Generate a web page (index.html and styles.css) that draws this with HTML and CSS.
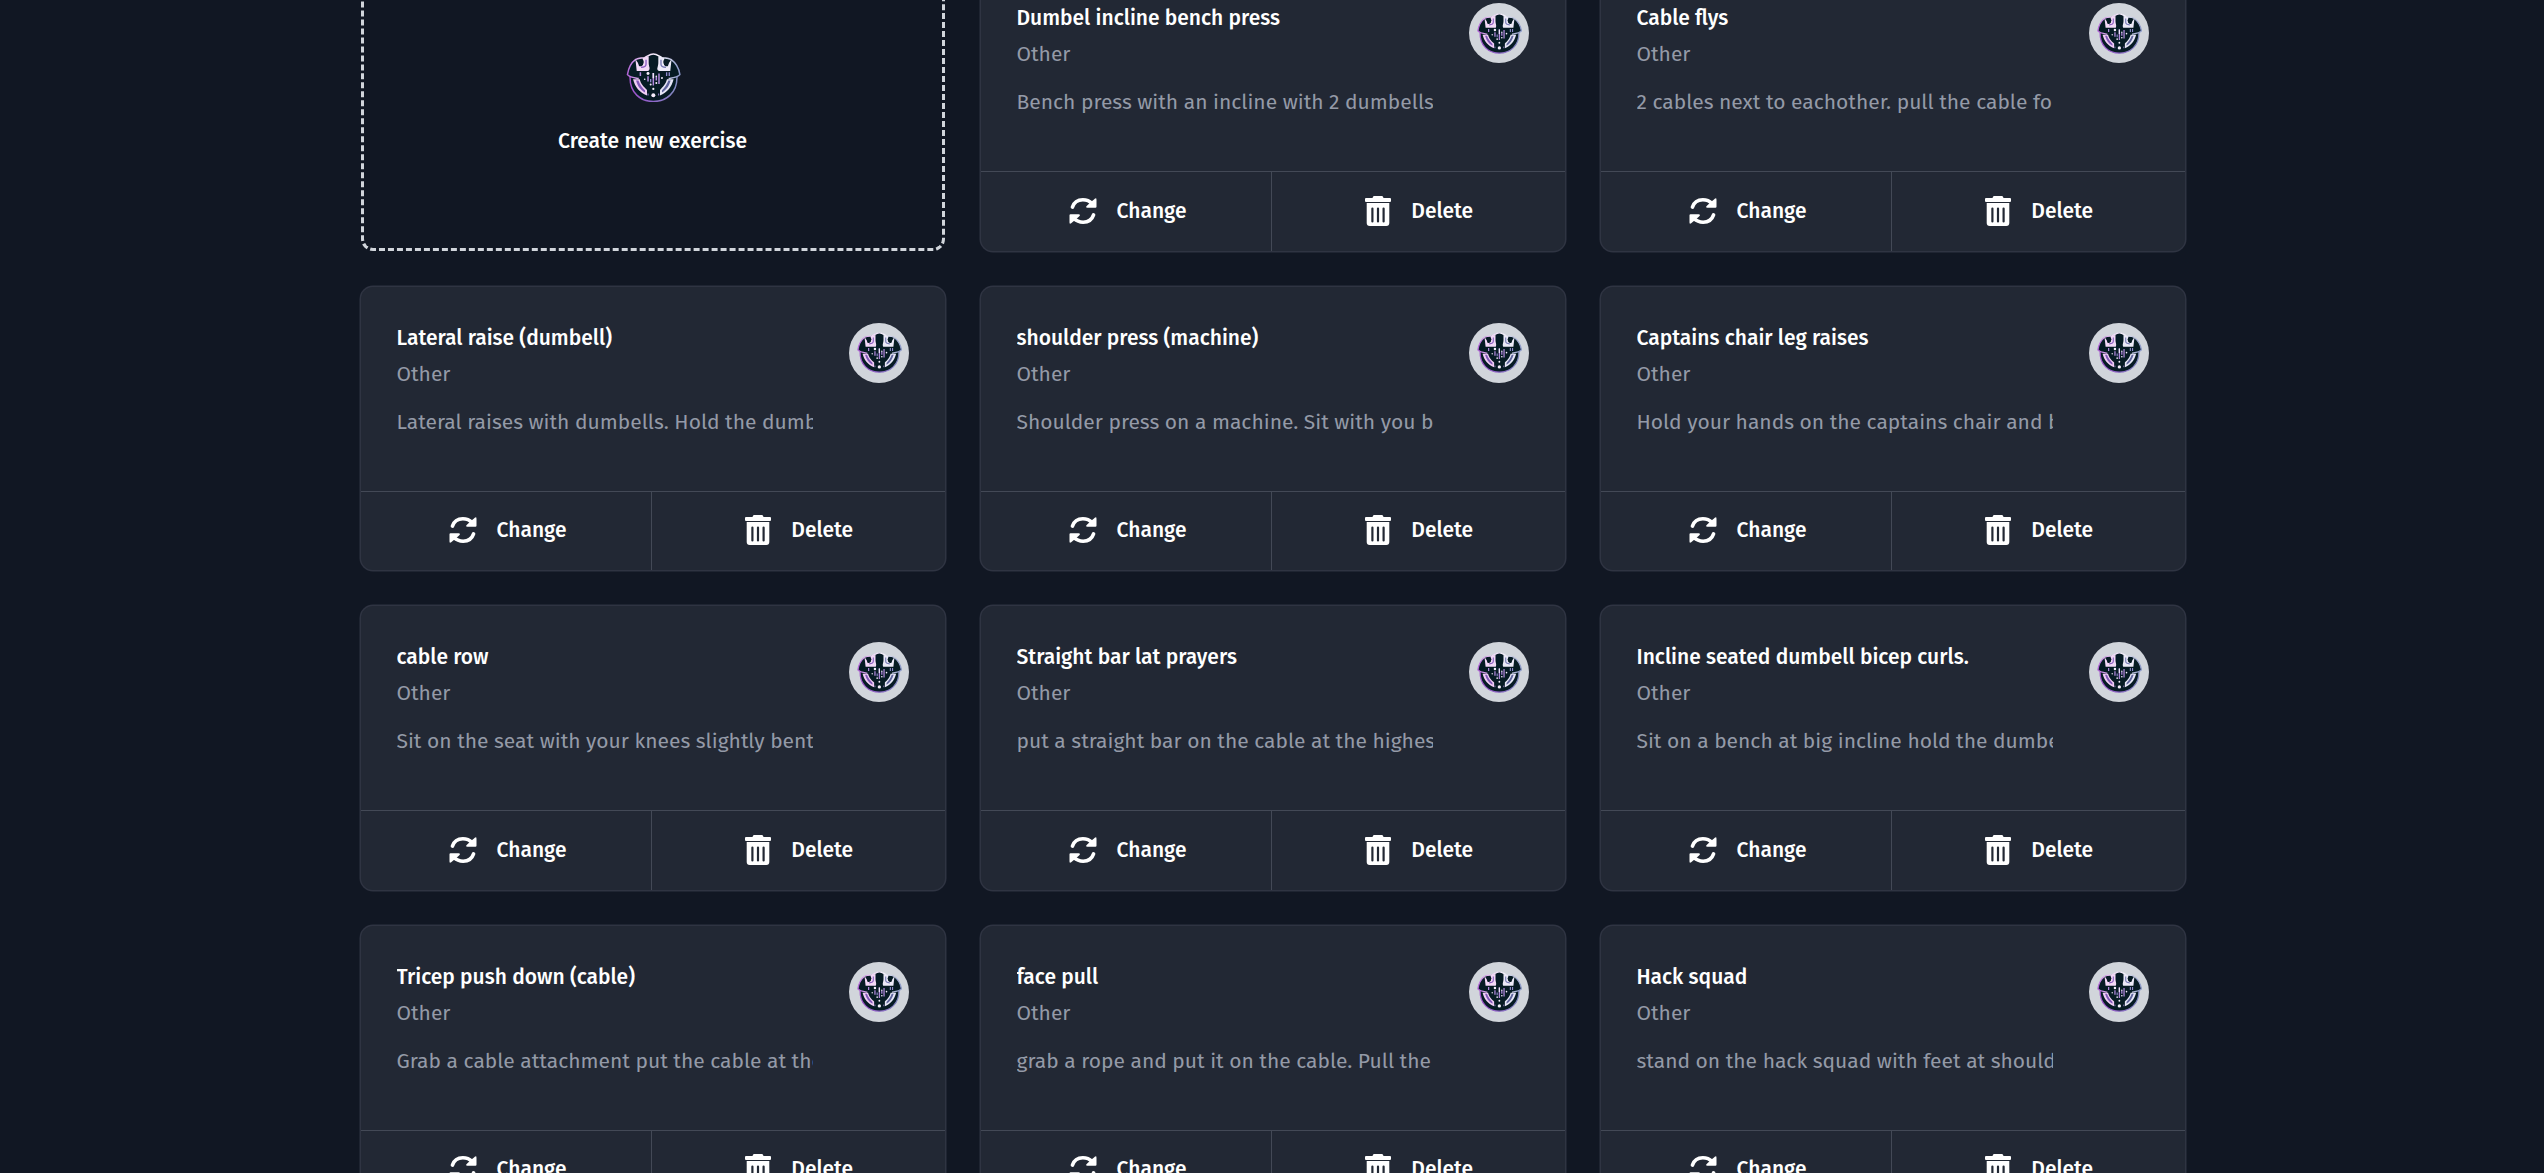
FILE: index.html
```html
<!DOCTYPE html>
<html lang="en">
<head>
<meta charset="utf-8">
<title>Exercises</title>
<link rel="stylesheet" href="styles.css">
</head>
<body>
<svg class="sprite" aria-hidden="true">
  <defs>
    <linearGradient id="rim" x1="48" y1="0" x2="210" y2="0" gradientUnits="userSpaceOnUse">
      <stop offset="0" stop-color="#a24fc9"/><stop offset=".45" stop-color="#8f63c9"/><stop offset="1" stop-color="#7f90bd"/>
    </linearGradient>
    <linearGradient id="crest" x1="48" y1="0" x2="210" y2="0" gradientUnits="userSpaceOnUse">
      <stop offset="0" stop-color="#b05fd6"/><stop offset=".35" stop-color="#f3dcf8"/><stop offset=".62" stop-color="#f4f2fb"/><stop offset="1" stop-color="#8492c4"/>
    </linearGradient>
    <symbol id="logo" viewBox="47 38 163 149">
      <path d="M58 108C56 158 90 184 128 184s73-26 71-76z" fill="#061b24" stroke="url(#rim)" stroke-width="4.500"/>
      <path d="M84 114c-16 1-28-2-34-13C54 82 62 66 76 56L102 52C112 47 118 41 128 41s16 6 26 11l26 4c14 10 24 26 28 45-6 11-18 14-34 13z" fill="#061b24"/>
      <path d="M84 115C72 113 56 111 50 103C53 84 60 68 74 58C78 54 86 53 102 52C112 47 118 41 128 41s16 6 26 11c16 1 24 2 28 6 14 10 23 26 26 45-6 8-22 10-34 12" fill="none" stroke="url(#crest)" stroke-width="4.500" stroke-linejoin="round"/>
      <path d="M74 56l4 36h34c4-1 6-4 5-8-2-8-3-12-3-18V48l-18 5 1 20c-4 5-8 6-12 4l-3-9z" fill="#f3d9f6"/>
      <path d="M183 56l-4 36h-34c-4-1-6-4-5-8 2-8 3-12 3-18V48l18 5-1 20c4 5 8 6 12 4l3-9z" fill="#eceaf8"/>
      <path d="M106 58v14c0 6-5 9-15 9" fill="none" stroke="#8a5bc0" stroke-width="4"/>
      <path d="M151 58v14c0 6 5 9 15 9" fill="none" stroke="#7479b4" stroke-width="4"/>
      <circle cx="91" cy="65" r="8" fill="#061b24"/>
      <circle cx="166" cy="65" r="8" fill="#061b24"/>
      <path d="M128 46c-9 0-12 6-12 15 0 7 3 11 3 18l-4 14h26l-4-14c0-7 3-11 3-18 0-9-3-15-12-15z" fill="#061b24"/>
      <path d="M89 96v11M112 108v16M128 98v38M145 100v31M137 109v12" stroke="#b48ae0" stroke-width="4.500"/>
      <path d="M168 96v11M176 96v11M120 116v10" stroke="#8f8cd0" stroke-width="4"/>
      <path d="M128 98v16" stroke="#efe3fa" stroke-width="4.500"/>
      <g fill="#f5eefc"><circle cx="112" cy="100" r="4.500"/><circle cx="120" cy="133" r="3"/><circle cx="137" cy="128" r="3"/><circle cx="137" cy="108" r="2.500"/><circle cx="154" cy="113" r="3"/><circle cx="102" cy="117" r="2.500"/><circle cx="128" cy="146" r="3.300"/><circle cx="128" cy="165" r="6"/></g>
      <path d="M112 160v6M144 160v6" stroke="#9a7fd0" stroke-width="3"/>
      <path d="M67 117h20c4 16 12 22 22 32v17C86 156 73 141 67 117z" fill="#f0cdf4"/>
      <path d="M76 121h7c5 14 11 20 20 30v6c-14-8-22-18-27-36z" fill="#8158b8"/>
      <path d="M189 117h-20c-4 16-12 22-21 32v17c22-10 35-25 41-49z" fill="#e6e6f6"/>
      <path d="M180 121h-7c-5 14-10 20-19 30v6c13-8 21-18 26-36z" fill="#5f669e"/>
    </symbol>
    <symbol id="refresh" viewBox="0 0 85 80">
      <g id="half">
        <path d="M10 28C15 13 28 5.500 42 5.500c12 0 21 4 29 12" fill="none" stroke="#fff" stroke-width="11" stroke-linecap="round"/>
        <path d="M65 14L79 2q5-3 5 3v22q0 3-3 3H56q-6 0-3-5z" fill="#fff"/>
      </g>
      <use href="#half" transform="rotate(180 42.500 40)"/>
    </symbol>
    <symbol id="trash" viewBox="0 0 26 30">
      <path fill="#fff" fill-rule="evenodd" d="M9 0h8q1 0 1.500 2H25q1 0 1 1v2q0 1-1 1H1Q0 6 0 5V3q0-1 1-1h6.500Q8 0 9 0zM1.700 7h22.600v20q0 3-3 3H4.700q-3 0-3-3zM6.300 12.500v13a1.100 1.100 0 0 0 2.200 0v-13a1.100 1.100 0 0 0-2.200 0zM11.900 12.500v13a1.100 1.100 0 0 0 2.200 0v-13a1.100 1.100 0 0 0-2.200 0zM17.500 12.500v13a1.100 1.100 0 0 0 2.200 0v-13a1.100 1.100 0 0 0-2.200 0z"/>
    </symbol>
  </defs>
</svg>
<main class="grid">
  <button class="create"><svg class="create-logo"><use href="#logo"/></svg><span class="create-label">Create new exercise</span></button>

  <article class="card">
    <div class="body"><div class="info"><h3>Dumbel incline bench press</h3><p class="type">Other</p><p class="desc">Bench press with an incline with 2 dumbells</p></div><div class="avatar"><svg><use href="#logo"/></svg></div></div>
    <footer><a class="change"><svg><use href="#refresh"/></svg>Change</a><a class="delete"><svg><use href="#trash"/></svg>Delete</a></footer>
  </article>
  <article class="card">
    <div class="body"><div class="info"><h3>Cable flys</h3><p class="type">Other</p><p class="desc">2 cables next to eachother. pull the cable fo</p></div><div class="avatar"><svg><use href="#logo"/></svg></div></div>
    <footer><a class="change"><svg><use href="#refresh"/></svg>Change</a><a class="delete"><svg><use href="#trash"/></svg>Delete</a></footer>
  </article>
  <article class="card">
    <div class="body"><div class="info"><h3>Lateral raise (dumbell)</h3><p class="type">Other</p><p class="desc">Lateral raises with dumbells. Hold the dumb</p></div><div class="avatar"><svg><use href="#logo"/></svg></div></div>
    <footer><a class="change"><svg><use href="#refresh"/></svg>Change</a><a class="delete"><svg><use href="#trash"/></svg>Delete</a></footer>
  </article>
  <article class="card">
    <div class="body"><div class="info"><h3>shoulder press (machine)</h3><p class="type">Other</p><p class="desc">Shoulder press on a machine. Sit with you b</p></div><div class="avatar"><svg><use href="#logo"/></svg></div></div>
    <footer><a class="change"><svg><use href="#refresh"/></svg>Change</a><a class="delete"><svg><use href="#trash"/></svg>Delete</a></footer>
  </article>
  <article class="card">
    <div class="body"><div class="info"><h3>Captains chair leg raises</h3><p class="type">Other</p><p class="desc">Hold your hands on the captains chair and b</p></div><div class="avatar"><svg><use href="#logo"/></svg></div></div>
    <footer><a class="change"><svg><use href="#refresh"/></svg>Change</a><a class="delete"><svg><use href="#trash"/></svg>Delete</a></footer>
  </article>
  <article class="card">
    <div class="body"><div class="info"><h3>cable row</h3><p class="type">Other</p><p class="desc">Sit on the seat with your knees slightly bent</p></div><div class="avatar"><svg><use href="#logo"/></svg></div></div>
    <footer><a class="change"><svg><use href="#refresh"/></svg>Change</a><a class="delete"><svg><use href="#trash"/></svg>Delete</a></footer>
  </article>
  <article class="card">
    <div class="body"><div class="info"><h3>Straight bar lat prayers</h3><p class="type">Other</p><p class="desc">put a straight bar on the cable at the highes</p></div><div class="avatar"><svg><use href="#logo"/></svg></div></div>
    <footer><a class="change"><svg><use href="#refresh"/></svg>Change</a><a class="delete"><svg><use href="#trash"/></svg>Delete</a></footer>
  </article>
  <article class="card">
    <div class="body"><div class="info"><h3>Incline seated dumbell bicep curls.</h3><p class="type">Other</p><p class="desc">Sit on a bench at big incline hold the dumbe</p></div><div class="avatar"><svg><use href="#logo"/></svg></div></div>
    <footer><a class="change"><svg><use href="#refresh"/></svg>Change</a><a class="delete"><svg><use href="#trash"/></svg>Delete</a></footer>
  </article>
  <article class="card">
    <div class="body"><div class="info"><h3>Tricep push down (cable)</h3><p class="type">Other</p><p class="desc">Grab a cable attachment put the cable at the</p></div><div class="avatar"><svg><use href="#logo"/></svg></div></div>
    <footer><a class="change"><svg><use href="#refresh"/></svg>Change</a><a class="delete"><svg><use href="#trash"/></svg>Delete</a></footer>
  </article>
  <article class="card">
    <div class="body"><div class="info"><h3>face pull</h3><p class="type">Other</p><p class="desc">grab a rope and put it on the cable. Pull the</p></div><div class="avatar"><svg><use href="#logo"/></svg></div></div>
    <footer><a class="change"><svg><use href="#refresh"/></svg>Change</a><a class="delete"><svg><use href="#trash"/></svg>Delete</a></footer>
  </article>
  <article class="card">
    <div class="body"><div class="info"><h3>Hack squad</h3><p class="type">Other</p><p class="desc">stand on the hack squad with feet at should</p></div><div class="avatar"><svg><use href="#logo"/></svg></div></div>
    <footer><a class="change"><svg><use href="#refresh"/></svg>Change</a><a class="delete"><svg><use href="#trash"/></svg>Delete</a></footer>
  </article>
</main>
</body>
</html>
```
FILE: styles.css
```css
* { box-sizing: border-box; }
html { background: #111723; }
body {
  margin: 0;
  height: 1173px;
  overflow: hidden;
  background: #111723;
  color: #fff;
  font: 400 21px/30px "Fira Sans", "Noto Sans", sans-serif;
}
.sprite { display: block; width: 0; height: 0; }
.grid {
  display: grid;
  grid-template-columns: repeat(3, 584px);
  grid-auto-rows: 283.5px;
  gap: 36px;
  width: 1824px;
  margin: -33px 0 0 361px;
}
.create {
  display: flex;
  flex-direction: column;
  align-items: center;
  gap: 23.5px;
  padding: 82.5px 0 0;
  border: 3px dashed #d1d5db;
  border-radius: 12px;
  background: none;
  color: #fff;
  font: inherit;
}
.create-logo { width: 55px; height: 49.5px; flex: none; }
.create-label { padding-right: 1px; font-weight: 500; }
.card {
  display: flex;
  flex-direction: column;
  border-radius: 12px;
  background: #222834;
  box-shadow: 0 0 0 1.5px #2f3442;
}
.body {
  display: flex;
  justify-content: space-between;
  height: 204px;
  padding: 36px 36px 36px 35.5px;
}
.info { width: 416.5px; overflow: hidden; }
h3, p { margin: 0; white-space: nowrap; }
h3 { font-size: inherit; font-weight: 500; }
.type { margin-top: 6px; color: #949aa7; }
.desc { margin-top: 18px; overflow: hidden; color: #949aa7; }
.avatar {
  display: grid;
  place-items: center;
  width: 60px;
  height: 60px;
  border-radius: 50%;
  background: #d1d5db;
}
.avatar svg { width: 45px; height: 41px; }
footer {
  display: flex;
  height: 79.5px;
  border-top: 1px solid #434956;
}
footer a {
  display: flex;
  align-items: center;
  justify-content: center;
  padding-bottom: 1px;
  font-weight: 500;
}
.change { width: 290px; gap: 19.5px; padding-left: 3.5px; }
.change svg { width: 28px; height: 26px; }
.delete { flex: 1; gap: 20.5px; padding-left: 1px; border-left: 1px solid #434956; }
.delete svg { width: 26px; height: 30px; }
```
